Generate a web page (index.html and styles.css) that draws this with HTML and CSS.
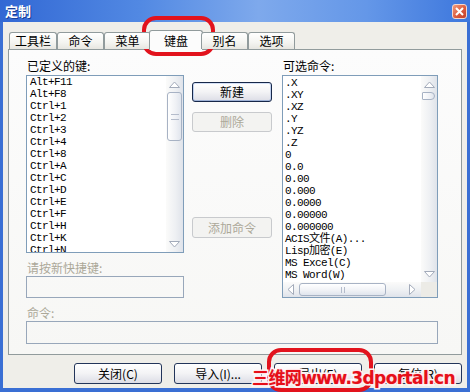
FILE: index.html
```html
<!DOCTYPE html>
<html>
<head>
    <title>定制</title>
    <link rel="stylesheet" href="styles.css">
</head>
<body>
    <div class="window">
        <div class="titlebar">
            <span class="title">定制</span>
            <span class="close">
                <svg width="9" height="9" viewBox="0 0 9 9"><path d="M1 1 L8 8 M8 1 L1 8" stroke="#fff" stroke-width="2"/></svg>
            </span>
        </div>
        <div class="client">
            <div class="tabs">
                <div class="tab first">工具栏</div>
                <div class="tab">命令</div>
                <div class="tab">菜单</div>
                <div class="tab active">键盘</div>
                <div class="tab">别名</div>
                <div class="tab">选项</div>
            </div>
            <div class="panel">
                <div class="top">
                    <div class="col-left">
                        <div class="label">已定义的键:</div>
                        <div class="listbox keys">
                            <ul class="items">
                                <li>Alt+F11</li>
                                <li>Alt+F8</li>
                                <li>Ctrl+1</li>
                                <li>Ctrl+2</li>
                                <li>Ctrl+3</li>
                                <li>Ctrl+4</li>
                                <li>Ctrl+8</li>
                                <li>Ctrl+A</li>
                                <li>Ctrl+C</li>
                                <li>Ctrl+D</li>
                                <li>Ctrl+E</li>
                                <li>Ctrl+F</li>
                                <li>Ctrl+H</li>
                                <li>Ctrl+K</li>
                                <li>Ctrl+N</li>
                            </ul>
                            <div class="vscroll">
                                <div class="arrow"><svg width="11" height="7"><polygon points="0.5,6.5 5.5,1 10.5,6.5" fill="#fff" stroke="#a3abba"/></svg></div>
                                <div class="thumb tall">
                                    <span class="grip"></span>
                                    <span class="grip"></span>
                                </div>
                                <div class="spacer"></div>
                                <div class="arrow"><svg width="11" height="7"><polygon points="0.5,0.5 5.5,6 10.5,0.5" fill="#fff" stroke="#a3abba"/></svg></div>
                            </div>
                        </div>
                        <div class="label sub disabled">请按新快捷键:</div>
                        <div class="field"></div>
                    </div>
                    <div class="col-mid">
                        <button class="btn default">新建</button>
                        <button class="btn del" disabled>删除</button>
                        <button class="btn add" disabled>添加命令</button>
                    </div>
                    <div class="col-right">
                        <div class="label">可选命令:</div>
                        <div class="listbox cmds">
                            <ul class="items">
                                <li>.X</li>
                                <li>.XY</li>
                                <li>.XZ</li>
                                <li>.Y</li>
                                <li>.YZ</li>
                                <li>.Z</li>
                                <li>0</li>
                                <li>0.0</li>
                                <li>0.00</li>
                                <li>0.000</li>
                                <li>0.0000</li>
                                <li>0.00000</li>
                                <li>0.000000</li>
                                <li>ACIS文件(A)...</li>
                                <li>Lisp加密(E)</li>
                                <li>MS Excel(C)</li>
                                <li>MS Word(W)</li>
                            </ul>
                            <div class="vscroll">
                                <div class="arrow"><svg width="11" height="7"><polygon points="0.5,6.5 5.5,1 10.5,6.5" fill="#fff" stroke="#a3abba"/></svg></div>
                                <div class="thumb short"></div>
                                <div class="spacer"></div>
                                <div class="arrow"><svg width="11" height="7"><polygon points="0.5,0.5 5.5,6 10.5,0.5" fill="#fff" stroke="#a3abba"/></svg></div>
                            </div>
                            <div class="hscroll">
                                <div class="arrow side"><svg width="7" height="11"><polygon points="6.5,0.5 1,5.5 6.5,10.5" fill="#fff" stroke="#a3abba"/></svg></div>
                                <div class="thumb wide">
                                    <span class="vgrip"></span>
                                    <span class="vgrip"></span>
                                </div>
                                <div class="spacer"></div>
                                <div class="arrow side end"><svg width="7" height="11"><polygon points="0.5,0.5 6,5.5 0.5,10.5" fill="#fff" stroke="#a3abba"/></svg></div>
                            </div>
                            <div class="corner"></div>
                        </div>
                    </div>
                </div>
                <div class="label sub disabled">命令:</div>
                <div class="field wide"></div>
            </div>
            <div class="actions">
                <button class="btn big">关闭(C)</button>
                <button class="btn big">导入(I)...</button>
                <button class="btn big">导出(E)</button>
                <button class="btn big">复位(R)</button>
            </div>
        </div>
        <div class="mark mark-tab"></div>
        <div class="mark mark-export"></div>
        <div class="watermark">三维网www.3dportal.cn</div>
    </div>
</body>
</html>
```

FILE: styles.css
```css
body {
    margin: 0;
    padding: 0;
    background-color: #fff;
    font-family: "Noto Sans CJK SC", sans-serif;
    font-size: 12px;
    color: #000;
}
.window {
    position: relative;
    width: 470px;
    height: 392px;
    overflow: hidden;
    display: flex;
    flex-direction: column;
}
.titlebar {
    height: 22px;
    flex: none;
    display: flex;
    align-items: center;
    justify-content: space-between;
    padding: 0 3px 0 5px;
    background: linear-gradient(90deg, #3268d4 0%, #5289e3 30%, #7ea9ec 55%, #6497e8 78%, #3d77dd 100%);
}
.title {
    color: #fff;
    font-weight: bold;
    font-size: 13px;
    line-height: 22px;
    text-shadow: 1px 1px 0 #1a3f98;
}
.close {
    width: 15px;
    height: 15px;
    box-sizing: border-box;
    border: 1px solid #f4d6cc;
    border-radius: 3px;
    background: linear-gradient(135deg, #f09a7c, #d9573a 60%, #c2402a);
    display: flex;
    align-items: center;
    justify-content: center;
}
.client {
    flex: 1;
    background-color: #efeee9;
    border: solid #3a6fd4;
    border-width: 0 3px 4px 3px;
    padding: 8px 5px 0;
    display: flex;
    flex-direction: column;
}
.tabs {
    display: flex;
    align-items: flex-end;
    height: 19px;
    padding-left: 1px;
    position: relative;
    z-index: 2;
}
.tab {
    width: 47px;
    height: 17px;
    box-sizing: border-box;
    border: 1px solid #919b9c;
    border-bottom: none;
    border-radius: 3px 3px 0 0;
    background: linear-gradient(#ffffff, #f4f4f0 60%, #e7e6e0);
    text-align: center;
    line-height: 16px;
}
.tab.first {
    width: 48px;
}
.tab.active {
    width: 54px;
    height: 20px;
    margin: 0 -2px -1px;
    background: #fcfcfc;
    line-height: 19px;
}
.panel {
    height: 306px;
    box-sizing: border-box;
    border: 1px solid #919b9c;
    background: linear-gradient(#fcfcfc, #f7f7f5);
    padding: 5px 23px 10px 17px;
}
.top {
    display: flex;
    height: 243px;
}
.col-left {
    width: 158px;
    display: flex;
    flex-direction: column;
}
.col-mid {
    width: 80px;
    margin: 0 10px 0 8px;
    padding-top: 27px;
    display: flex;
    flex-direction: column;
}
.col-right {
    width: 156px;
    display: flex;
    flex-direction: column;
}
.label {
    height: 20px;
    line-height: 22px;
    padding-left: 1px;
    white-space: nowrap;
}
.label.sub {
    height: 23px;
    box-sizing: border-box;
    padding-top: 8px;
    line-height: 14px;
}
.disabled {
    color: #aca899;
}
.listbox {
    box-sizing: border-box;
    border: 1px solid #7f9db9;
    background-color: #fff;
    display: grid;
    overflow: hidden;
}
.keys {
    height: 178px;
    grid-template-columns: 1fr 17px;
}
.cmds {
    height: 223px;
    grid-template-columns: 1fr 16px;
    grid-template-rows: 1fr 15px;
}
.items {
    list-style: none;
    margin: 0;
    padding: 0 0 0 3px;
    font-family: "Liberation Mono", "Noto Sans CJK SC", monospace;
    font-size: 11px;
    letter-spacing: -0.6px;
    line-height: 12px;
    white-space: nowrap;
    overflow: hidden;
}
.items li {
    height: 12px;
}
.cmds .items {
    padding: 1px 0 0 2px;
}
.vscroll {
    display: flex;
    flex-direction: column;
    background: linear-gradient(90deg, #fbfbfa, #eef0f3 55%, #dfe3ea);
}
.hscroll {
    display: flex;
    align-items: center;
    background: linear-gradient(#fbfbfa, #eef0f3 55%, #dfe3ea);
}
.arrow {
    height: 16px;
    flex: none;
    display: flex;
    align-items: center;
    justify-content: center;
}
.arrow.side {
    width: 14px;
    height: 15px;
}
.arrow.side.end {
    width: 18px;
}
.spacer {
    flex: 1;
}
.thumb {
    box-sizing: border-box;
    border: 1px solid #a7b2c4;
    border-radius: 3px;
    background: linear-gradient(90deg, #ffffff, #eff1f5 60%, #e0e5ed);
}
.thumb.tall {
    height: 49px;
    margin: 0 1px;
    display: flex;
    flex-direction: column;
    align-items: center;
    justify-content: center;
    gap: 4px;
}
.thumb.short {
    height: 8px;
    margin: 0 2px 0 1px;
    border-radius: 1px 4px 4px 1px;
}
.thumb.wide {
    width: 87px;
    height: 13px;
    margin-left: 2px;
    background: linear-gradient(#ffffff, #eff1f5 60%, #e0e5ed);
    display: flex;
    align-items: center;
    justify-content: center;
    gap: 2px;
}
.grip {
    width: 8px;
    height: 1px;
    background-color: #b4bccb;
}
.vgrip {
    width: 1px;
    height: 6px;
    background-color: #b4bccb;
}
.corner {
    background-color: #ecebe6;
}
.field {
    height: 22px;
    box-sizing: border-box;
    border: 1px solid #98a7ba;
}
.field.wide {
    width: 412px;
    height: 23px;
}
.btn {
    box-sizing: border-box;
    width: 80px;
    height: 20px;
    padding: 0;
    font-family: "Noto Sans CJK SC", sans-serif;
    font-size: 12px;
    line-height: 18px;
    color: #000;
    border: 1px solid #23355a;
    border-radius: 3px;
    background: linear-gradient(#ffffff, #f3f3f5 50%, #dcdde6);
}
.btn.default {
    border-color: #17284a;
    box-shadow: inset 0 1px 0 #d4e0f6, inset 0 -1px 0 #9fb2d6, inset 1px 0 0 #c0d0ee, inset -1px 0 0 #c0d0ee;
}
.btn:disabled {
    color: #aca899;
    border-color: #c8cacd;
    background: #f3f3f1;
}
.btn.del {
    margin-top: 10px;
}
.btn.add {
    margin-top: 85px;
    height: 21px;
}
.actions {
    display: flex;
    justify-content: flex-end;
    gap: 12px;
    margin-top: 8px;
}
.btn.big {
    width: 88px;
    height: 21px;
    line-height: 19px;
}
.mark {
    position: absolute;
    box-sizing: border-box;
    border: 4px solid #e2131d;
    border-radius: 14px;
}
.mark-tab {
    left: 142px;
    top: 16px;
    width: 73px;
    height: 40px;
}
.mark-export {
    left: 267px;
    top: 348px;
    width: 106px;
    height: 44px;
}
.watermark {
    position: absolute;
    left: 252px;
    top: 368px;
    font-family: "DejaVu Sans", "Noto Sans CJK SC", sans-serif;
    font-weight: bold;
    font-size: 17px;
    line-height: 20px;
    letter-spacing: -0.6px;
    color: #e60f19;
    -webkit-text-stroke: 3px #fff;
    paint-order: stroke fill;
    text-shadow: 0 0 2px #f3a0a6;
    white-space: nowrap;
}
```
